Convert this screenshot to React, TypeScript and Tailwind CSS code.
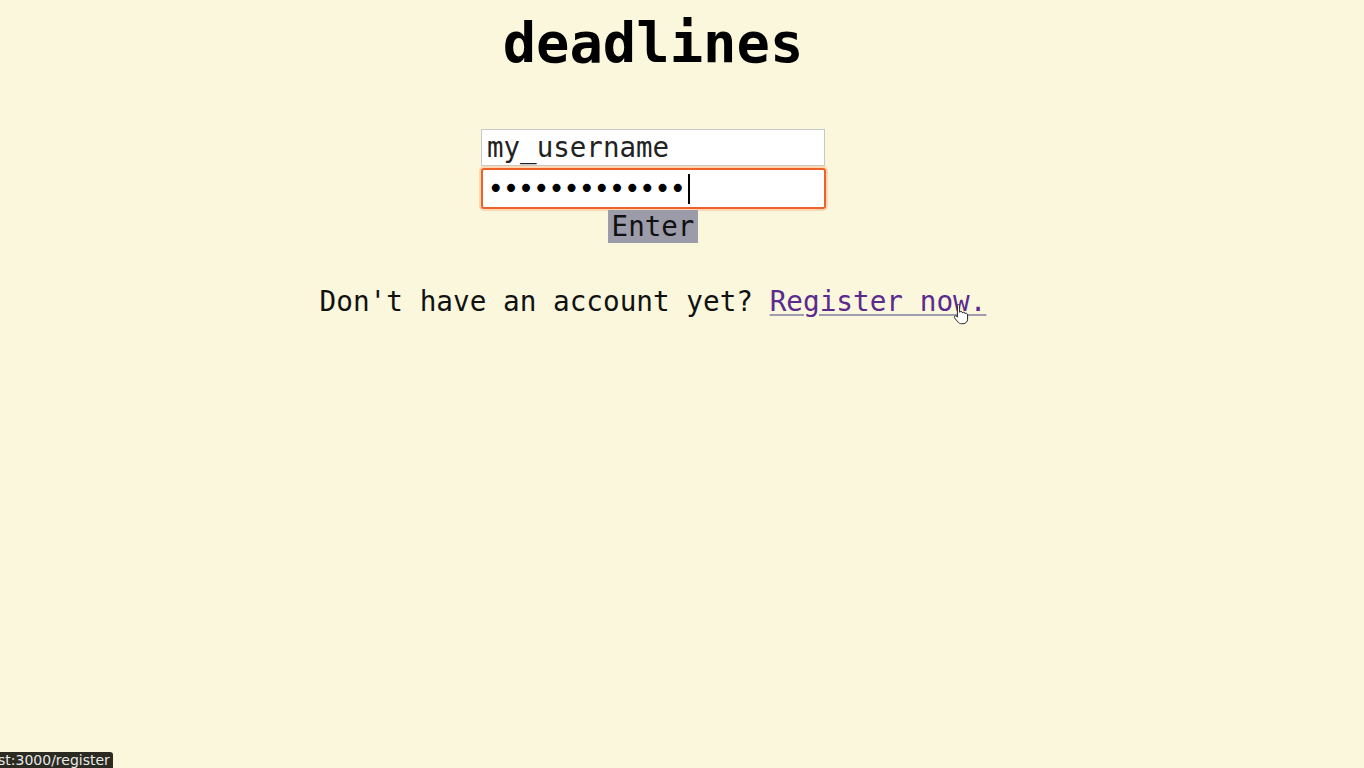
import React from "react";

export default function App() {
  return (
    <div className="relative min-h-screen w-full bg-[#faf7dc] text-[#111] font-['DejaVu_Sans_Mono',monospace] overflow-hidden">
      <div className="flex flex-col items-center pt-[11px] pr-[58px]">
        {/* Title */}
        <h1 className="text-[55.5px] leading-[64px] font-bold text-black">deadlines</h1>

        {/* Login form */}
        <form className="mt-[54px] flex flex-col items-center" onSubmit={(e) => e.preventDefault()}>
          <div className="w-[344px] h-[37px] bg-white border border-[#c8c8c8] flex items-center px-[5px] text-[27.5px] text-[#222]">
            my_username
          </div>
          <div className="mt-[2px] w-[345px] h-[41px] bg-white border-2 border-[#f0602a] rounded-[3px] shadow-[0_0_0_2px_#fcd9b4] flex items-center px-[5px] text-[27.5px] text-black">
            <span className="tracking-[-1.4px]">•••••••••••••</span>
            <span className="ml-[3px] w-[2px] h-[30px] bg-black" />
          </div>
          <button
            type="submit"
            className="mt-[1px] h-[33px] px-[4px] bg-[#9b9ba9] text-[27.5px] leading-[33px] text-[#111]"
          >
            Enter
          </button>
        </form>

        {/* Register prompt */}
        <p className="mt-[42px] text-[27.7px] leading-[33px] text-[#111]">
          Don't have an account yet?{" "}
          <a href="#" className="relative text-[#5b2a8f] underline decoration-[#a09cb0] underline-offset-[3px]">
            Register now.
            {/* pointer cursor */}
            <svg
              className="absolute left-[183px] top-[18px]"
              width="18"
              height="22"
              viewBox="0 0 18 22"
            >
              <path
                d="M5 1.5c1 0 1.6.7 1.6 1.6v6.2c.3-.6.9-.9 1.6-.8.9.1 1.3.8 1.3 1.4.3-.6 1-.8 1.6-.6.7.2 1 .8 1 1.4.4-.5 1-.6 1.6-.3.6.3.9.9.9 1.5v4.3c0 2.5-2 4.5-4.5 4.5H8.4c-1.5 0-2.6-.6-3.5-1.8L1.6 15c-.5-.7-.3-1.5.3-1.9.6-.4 1.4-.3 1.9.3l.6.8V3.1C4.4 2.2 4.1 1.5 5 1.5z"
                fill="#fff"
                stroke="#222"
                strokeWidth="1"
                strokeLinejoin="round"
              />
            </svg>
          </a>
        </p>
      </div>

      {/* Browser status bubble */}
      <div className="absolute bottom-0 left-0 h-[16px] w-[113px] bg-[#2b2b22] rounded-tr-[3px] overflow-hidden flex items-center">
        <span className="ml-[-2px] whitespace-nowrap text-[14px] leading-[16px] text-[#e8e8e8] font-['DejaVu_Sans',sans-serif]">
          st:3000/register
        </span>
      </div>
    </div>
  );
}
